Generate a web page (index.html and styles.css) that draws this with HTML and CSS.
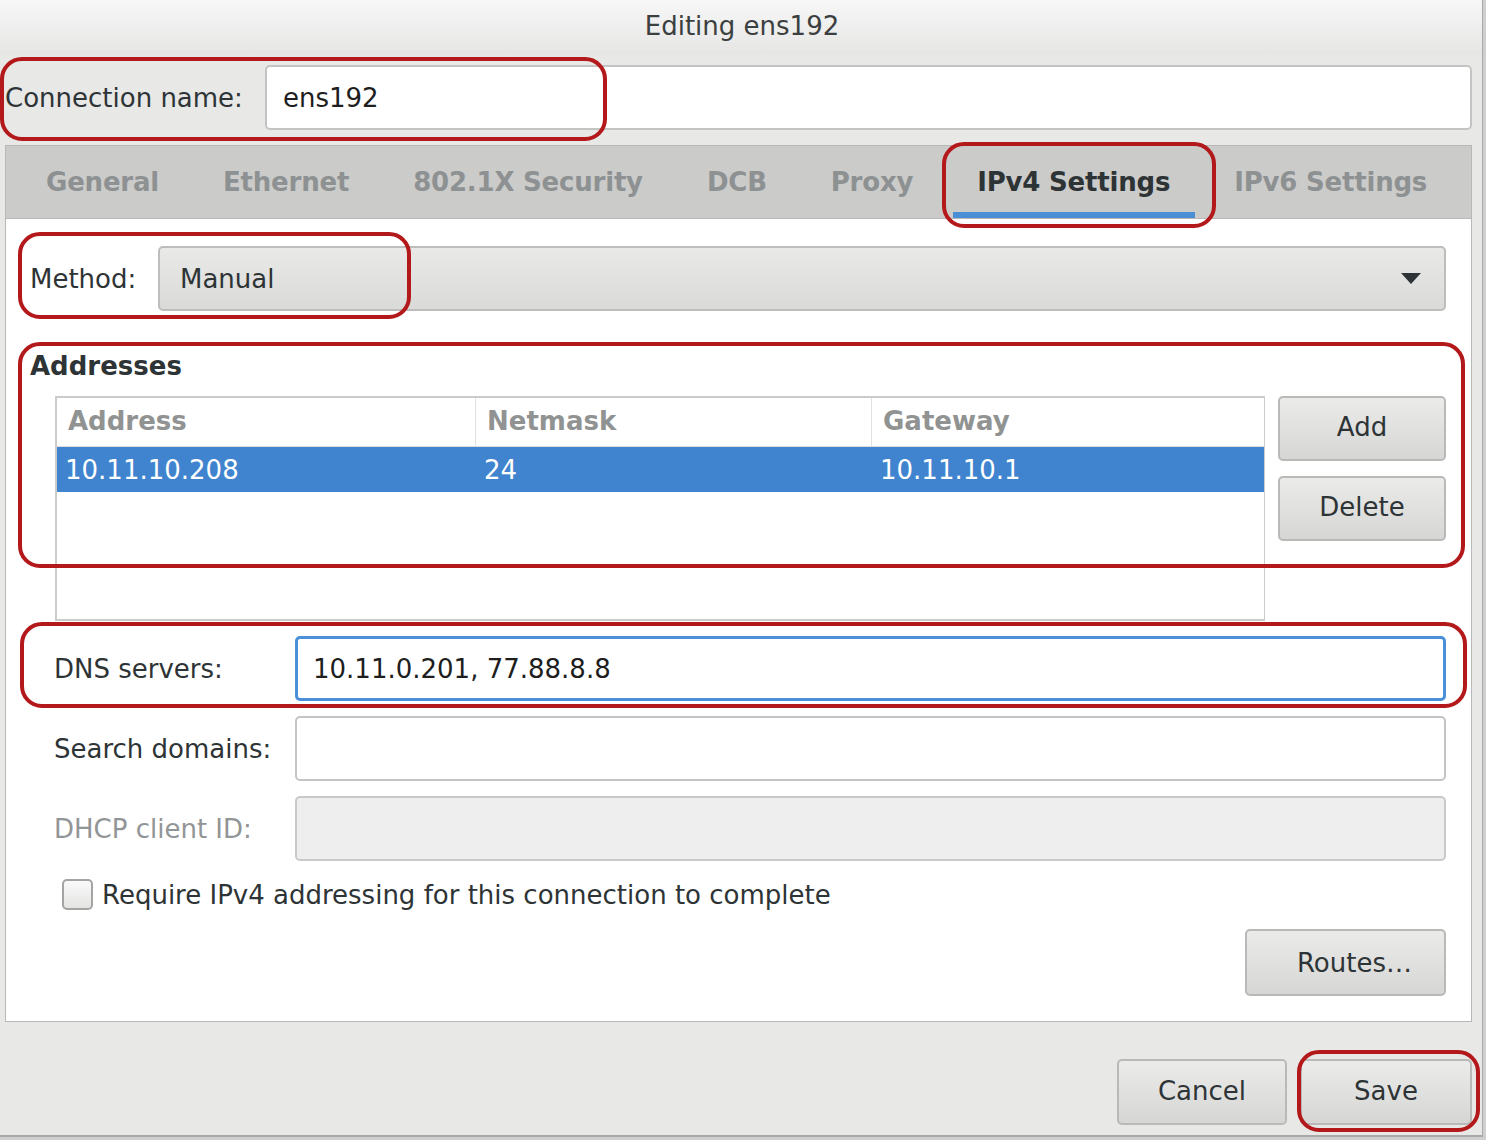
FILE: index.html
```html
<!DOCTYPE html>
<html>
<head>
<meta charset="utf-8">
<link rel="stylesheet" href="styles.css">
</head>
<body>
<div class="window">
  <div class="titlebar">Editing ens192</div>
  <div class="dialog">
    <div class="conn-row">
      <span class="conn-label">Connection name:</span>
      <div class="entry conn-entry">ens192</div>
    </div>
    <div class="notebook">
      <div class="tabs">
        <div class="tab">General</div>
        <div class="tab">Ethernet</div>
        <div class="tab">802.1X Security</div>
        <div class="tab">DCB</div>
        <div class="tab">Proxy</div>
        <div class="tab active">IPv4 Settings</div>
        <div class="tab">IPv6 Settings</div>
      </div>
      <div class="panel">
        <div class="method-row">
          <span class="method-label">Method:</span>
          <div class="combo">
            <span>Manual</span>
            <svg class="arrow" width="20" height="11" viewBox="0 0 20 11"><path d="M0 0 L20 0 L10 11 Z" fill="#2e3436"/></svg>
          </div>
        </div>
        <div class="section-title">Addresses</div>
        <div class="addr-area">
          <div class="table">
            <div class="thead">
              <div class="th c1">Address</div>
              <div class="th c2">Netmask</div>
              <div class="th c3">Gateway</div>
            </div>
            <div class="tr selected">
              <div class="td c1">10.11.10.208</div>
              <div class="td c2">24</div>
              <div class="td c3">10.11.10.1</div>
            </div>
          </div>
          <div class="side-buttons">
            <div class="btn side-btn">Add</div>
            <div class="btn side-btn">Delete</div>
          </div>
        </div>
        <div class="form">
          <span class="form-label">DNS servers:</span>
          <div class="entry focus">10.11.0.201, 77.88.8.8</div>
          <span class="form-label">Search domains:</span>
          <div class="entry"></div>
          <span class="form-label disabled">DHCP client ID:</span>
          <div class="entry disabled-entry"></div>
        </div>
        <div class="check-row">
          <span class="checkbox"></span>
          <span class="check-label">Require IPv4 addressing for this connection to complete</span>
        </div>
        <div class="routes-row">
          <div class="btn routes">Routes…</div>
        </div>
      </div>
    </div>
    <div class="actions">
      <div class="btn cancel">Cancel</div>
      <div class="btn save">Save</div>
    </div>
  </div>

  <div class="mark m1"></div>
  <div class="mark m2"></div>
  <div class="mark m3"></div>
  <div class="mark m4"></div>
  <div class="mark m5"></div>
  <div class="mark m6"></div>
</div>
</body>
</html>
```
FILE: styles.css
```css
* { box-sizing: border-box; }
html, body { margin: 0; padding: 0; }
body {
  background: #cfcfcf;
  width: 1486px;
  height: 1140px;
  overflow: hidden;
  font-family: "DejaVu Sans", "Liberation Sans", sans-serif;
  font-size: 26px;
  color: #2e3436;
}
.window {
  position: relative;
  width: 1483px;
  height: 1137px;
  background: #e8e8e7;
  border-right: 1px solid #a9a9a9;
  border-bottom: 2px solid #a9a9a9;
  display: flex;
  flex-direction: column;
}
.titlebar {
  height: 55px;
  display: flex;
  align-items: center;
  justify-content: center;
  padding-bottom: 4px;
  background: linear-gradient(#f7f7f7, #e6e6e5);
  color: #3b3f40;
  font-size: 26px;
  padding-left: 2px;
}
.dialog {
  flex: 1;
  padding: 10px 10px 0 5px;
  display: flex;
  flex-direction: column;
}
.conn-row {
  height: 65px;
  display: flex;
  align-items: center;
}
.conn-label {
  width: 260px;
  flex: none;
}
.entry {
  background: #ffffff;
  border: 2px solid #c4c4c2;
  border-radius: 5px;
  height: 65px;
  display: flex;
  align-items: center;
  padding-left: 16px;
  color: #1e1e1e;
}
.conn-entry { flex: 1; }
.notebook {
  margin-top: 15px;
  display: flex;
  flex-direction: column;
}
.tabs {
  height: 73px;
  background: #cbcbca;
  border: 1px solid #b8b8b6;
  border-bottom: none;
  display: flex;
  padding-left: 8px;
}
.tab {
  position: relative;
  flex: none;
  white-space: nowrap;
  padding: 0 32px;
  display: flex;
  align-items: center;
  font-weight: bold;
  letter-spacing: -0.2px;
  color: #8e9192;
}
.tab.active {
  color: #2e3436;
}
.tab.active::after {
  content: "";
  position: absolute;
  left: 8px;
  right: 7px;
  bottom: 0;
  height: 6px;
  background: #4a8ed6;
}
.panel {
  background: #ffffff;
  border: 1px solid #b8b8b6;
  padding: 27px 25px 25px 24px;
  display: flex;
  flex-direction: column;
}
.method-row {
  height: 65px;
  display: flex;
  align-items: center;
}
.method-label {
  width: 128px;
  flex: none;
}
.combo {
  flex: 1;
  height: 65px;
  border: 2px solid #bdbdbb;
  border-radius: 5px;
  background: linear-gradient(#e9e9e8, #dadad9);
  display: flex;
  align-items: center;
  justify-content: space-between;
  padding: 0 23px 0 20px;
}
.arrow { display: block; }
.section-title {
  margin-top: 40px;
  height: 30px;
  line-height: 30px;
  font-weight: bold;
  color: #2e3436;
}
.addr-area {
  margin-top: 15px;
  margin-left: 25px;
  display: flex;
  gap: 13px;
  align-items: flex-start;
}
.table {
  flex: 1;
  height: 225px;
  border: 2px solid #cbcbca;
  border-right-width: 1px;
  background: #fff;
}
.thead {
  display: flex;
  height: 49px;
  border-bottom: 1px solid #dcdcdc;
}
.th {
  font-weight: bold;
  color: #919393;
  display: flex;
  align-items: center;
  padding-left: 11px;
  padding-bottom: 3px;
}
.th.c1, .th.c2 { border-right: 1px solid #e1e1e1; }
.c1 { width: 419px; flex: none; }
.c2 { width: 396px; flex: none; }
.c3 { flex: 1; }
.tr {
  display: flex;
  height: 45px;
}
.tr.selected {
  background: #4084cf;
  color: #ffffff;
}
.td {
  display: flex;
  align-items: center;
  padding-left: 8px;
}
.side-buttons {
  width: 168px;
  flex: none;
  display: flex;
  flex-direction: column;
  gap: 15px;
}
.btn {
  height: 65px;
  border: 2px solid #b9b9b7;
  border-radius: 5px;
  background: linear-gradient(#ebebea, #d6d6d5);
  display: flex;
  align-items: center;
  justify-content: center;
  color: #2e3436;
}
.side-btn { padding-bottom: 3px; }
.form {
  margin-top: 15px;
  margin-left: 24px;
  display: grid;
  grid-template-columns: 241px 1fr;
  row-gap: 15px;
  align-items: center;
}
.form-label { color: #2e3436; }
.form-label.disabled { color: #929596; }
.entry.focus {
  border: 3px solid #4a90d9;
  padding-left: 15px;
}
.entry.disabled-entry {
  background: #eeeeee;
  border-color: #c9c9c7;
}
.check-row {
  margin-top: 18px;
  margin-left: 32px;
  height: 31px;
  display: flex;
  align-items: center;
}
.checkbox {
  width: 31px;
  height: 31px;
  flex: none;
  border: 2px solid #a4a4a2;
  border-radius: 5px;
  background: linear-gradient(#fafafa, #e4e4e3);
  margin-right: 9px;
}
.check-label {
  white-space: nowrap;
}
.routes-row {
  margin-top: 19px;
  display: flex;
  justify-content: flex-end;
}
.btn.routes {
  width: 201px;
  height: 67px;
  justify-content: flex-end;
  padding-right: 32px;
}
.actions {
  margin-top: 37px;
  display: flex;
  justify-content: flex-end;
  gap: 13px;
}
.btn.cancel { width: 170px; height: 66px; padding-bottom: 2px; }
.btn.save { width: 172px; height: 66px; padding-bottom: 2px; }

.mark {
  position: absolute;
  border: 4px solid #b3191a;
  border-radius: 22px;
  pointer-events: none;
}
.m1 { left: 0; top: 57px; width: 607px; height: 84px; }
.m2 { left: 942px; top: 142px; width: 274px; height: 86px; }
.m3 { left: 18px; top: 232px; width: 393px; height: 87px; }
.m4 { left: 18px; top: 342px; width: 1447px; height: 226px; }
.m5 { left: 20px; top: 622px; width: 1447px; height: 86px; }
.m6 { left: 1297px; top: 1050px; width: 183px; height: 82px; }
```
